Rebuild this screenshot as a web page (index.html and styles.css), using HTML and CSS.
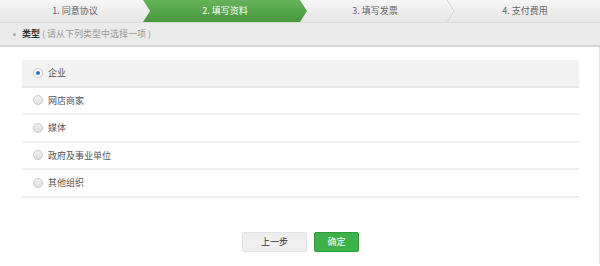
FILE: index.html
```html
<!DOCTYPE html>
<html lang="zh-CN">
<head>
    <meta charset="UTF-8">
    <title>填写资料</title>
    <link rel="stylesheet" href="styles.css">
</head>
<body>
    <nav class="steps">
        <div class="step">1. 同意协议</div>
        <div class="step aktiv">2. 填写资料</div>
        <div class="step">3. 填写发票
            <svg class="sep" width="9" height="22" viewBox="0 0 9 22"><polyline points="1,0 8,11 1,22" fill="none" stroke="#d6d6d6" stroke-width="1"/></svg>
        </div>
        <div class="step">4. 支付费用</div>
    </nav>

    <header class="titel">
        <span class="prik"></span>
        <b>类型</b><span class="hint">( 请从下列类型中选择一项 )</span>
    </header>

    <section class="panel">
        <ul class="typer">
            <li class="valgt"><span class="radio on"></span>企业</li>
            <li><span class="radio"></span>网店商家</li>
            <li><span class="radio"></span>媒体</li>
            <li><span class="radio"></span>政府及事业单位</li>
            <li><span class="radio"></span>其他组织</li>
        </ul>
        <div class="knapper">
            <button class="knap tilbage">上一步</button>
            <button class="knap ok">确定</button>
        </div>
    </section>
</body>
</html>
```

FILE: styles.css
```css
body {
    margin: 0;
    font-family: "Noto Sans CJK SC", "Liberation Sans", sans-serif;
    font-size: 9px;
    color: #444;
    background: #fff;
}

.steps {
    display: flex;
    height: 22px;
    background: linear-gradient(#f6f6f6, #e6e6e6);
    border-bottom: 1px solid #dcdcdc;
}
.step {
    position: relative;
    width: 150px;
    line-height: 22px;
    text-align: center;
    color: #666;
}
.step.aktiv {
    width: 164px;
    margin: 0 -7px;
    z-index: 1;
    color: #fff;
    background: linear-gradient(#66b45a, #46983b);
    clip-path: polygon(0 0, 157px 0, 164px 50%, 157px 100%, 0 100%, 7px 50%);
}
.sep {
    position: absolute;
    right: -5px;
    top: 0;
}

.titel {
    height: 22px;
    line-height: 22px;
    padding-left: 13px;
    background: #ebebeb;
    border-bottom: 2px solid #d4d4d4;
    color: #333;
}
.prik {
    display: inline-block;
    width: 3px;
    height: 3px;
    border-radius: 50%;
    background: #aaa;
    margin-right: 4px;
    vertical-align: middle;
}
.titel b {
    color: #333;
}
.hint {
    color: #999;
    margin-left: 2px;
}

.panel {
    border-right: 1px solid #e2e2e2;
    padding: 13px 20px 12px 22px;
}
.typer {
    list-style: none;
    margin: 0;
    padding: 0;
}
.typer li {
    display: flex;
    align-items: center;
    height: 25.5px;
    padding-left: 11px;
    border-bottom: 2px solid #eeeeee;
    color: #555;
}
.typer li.valgt {
    background: #f2f2f2;
    border-bottom-color: #e6e6e6;
}
.radio {
    box-sizing: border-box;
    width: 10px;
    height: 10px;
    border-radius: 50%;
    border: 1px solid #c8c8c8;
    background: linear-gradient(#f2f2f2, #e0e0e0);
    margin-right: 5px;
    position: relative;
}
.radio.on {
    background: #fff;
}
.radio.on::after {
    content: "";
    position: absolute;
    left: 2px;
    top: 2px;
    width: 4px;
    height: 4px;
    border-radius: 50%;
    background: #1a73d9;
}

.knapper {
    display: flex;
    justify-content: center;
    gap: 7px;
    margin-top: 34px;
}
.knap {
    height: 20px;
    font-family: inherit;
    font-size: 9px;
    border-radius: 2px;
    padding: 0;
}
.tilbage {
    width: 65px;
    background: #efefef;
    border: 1px solid #e2e2e2;
    color: #333;
}
.ok {
    width: 45px;
    background: #3db24b;
    border: 1px solid #2f9a3c;
    color: #fff;
}
```
